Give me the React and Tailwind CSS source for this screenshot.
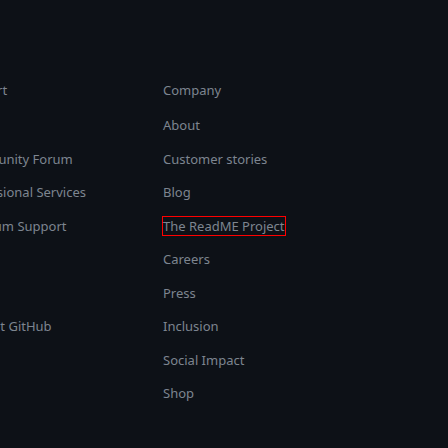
export default function App() {
  const right = ["About", "Customer stories", "Blog", "The ReadME Project", "Careers", "Press", "Inclusion", "Social Impact", "Shop"];
  return (
    <div className="w-[448px] h-[448px] overflow-hidden bg-[#0d1117] text-[#7d8590] text-[13px] leading-[18px]" style={{ fontFamily: '"Noto Sans", sans-serif' }}>
      <div className="flex pt-[81px]">
        <div className="w-[205px] shrink-0 ml-[-42px] flex flex-col">
          <div className="mb-[17px]">Support</div>
          <div className="flex flex-col gap-[15.5px]">
            <div className="invisible">Docs</div>
            <div>Community Forum</div>
            <div>Professional Services</div>
            <div>Premium Support</div>
            <div className="invisible">Skills</div>
            <div className="invisible">Status</div>
            <div>Contact GitHub</div>
          </div>
        </div>
        <div className="flex flex-col">
          <div className="mb-[17px]">Company</div>
          <div className="flex flex-col gap-[15.5px]">
            {right.map((t) =>
              t === "The ReadME Project" ? (
                <div key={t} className="h-[18px]">
                  <span className="inline-block border border-[#ff0000] leading-[18px] mt-[-1px] ml-[-1px] whitespace-nowrap">{t}</span>
                </div>
              ) : (
                <div key={t}>{t}</div>
              )
            )}
          </div>
        </div>
      </div>
    </div>
  );
}
